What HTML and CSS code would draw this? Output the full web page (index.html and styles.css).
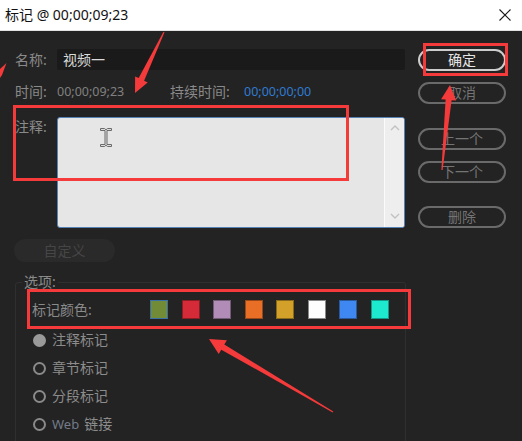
FILE: index.html
```html
<!DOCTYPE html>
<html lang="zh-CN">
<head>
<meta charset="utf-8">
<title>标记</title>
<link rel="stylesheet" href="styles.css">
</head>
<body>
<div class="window">
  <header class="titlebar">
    <span class="title">标记 @ 00;00;09;23</span>
    <svg class="close" width="12" height="12" viewBox="0 0 12 12"><path d="M0.5 0.5 L11.5 11.5 M11.5 0.5 L0.5 11.5" stroke="#1a1a1a" stroke-width="1.1" fill="none"/></svg>
  </header>
  <div class="content">
    <div class="left">
      <div class="row name-row">
        <span class="label field-label">名称:</span>
        <div class="text-input">视频一</div>
      </div>
      <div class="row time-row">
        <div class="time-group">
          <span class="label field-label">时间:</span><span class="num">00;00;09;23</span>
        </div>
        <span class="label dur-label">持续时间:</span><span class="num blue">00;00;00;00</span>
      </div>
      <div class="row comment-row">
        <span class="label field-label">注释:</span>
        <div class="textarea">
          <div class="ta-body"></div>
          <div class="ta-scroll">
            <svg width="10" height="6" viewBox="0 0 10 6"><path d="M1 5 L5 1 L9 5" stroke="#c2c2c2" stroke-width="1.4" fill="none"/></svg>
            <svg width="10" height="6" viewBox="0 0 10 6"><path d="M1 1 L5 5 L9 1" stroke="#c2c2c2" stroke-width="1.4" fill="none"/></svg>
          </div>
        </div>
      </div>
      <button class="custom-btn">自定义</button>
      <fieldset class="options">
        <legend>选项:</legend>
        <div class="options-inner">
          <div class="color-row">
            <span class="color-label">标记颜色:</span>
            <div class="swatches">
              <span class="swatch c-olive"></span>
              <span class="swatch c-red"></span>
              <span class="swatch c-lavender"></span>
              <span class="swatch c-orange"></span>
              <span class="swatch c-gold"></span>
              <span class="swatch c-white"></span>
              <span class="swatch c-blue"></span>
              <span class="swatch c-cyan"></span>
            </div>
          </div>
          <ul class="radios">
            <li><span class="radio checked"></span><span>注释标记</span></li>
            <li><span class="radio"></span><span>章节标记</span></li>
            <li><span class="radio"></span><span>分段标记</span></li>
            <li><span class="radio"></span><span><span class="web">Web</span>链接</span></li>
          </ul>
        </div>
      </fieldset>
    </div>
    <div class="right">
      <button class="btn primary">确定</button>
      <button class="btn gap-sm">取消</button>
      <button class="btn gap-lg">上一个</button>
      <button class="btn gap-sm">下一个</button>
      <button class="btn gap-lg2">删除</button>
    </div>
  </div>

  <svg class="cursor" width="12" height="19" viewBox="0 0 12 19"><path d="M0.5 0.5 H4.5 L6 1.8 L7.5 0.5 H11.5 V2.5 H7 V16.5 H11.5 V18.5 H7.5 L6 17.2 L4.5 18.5 H0.5 V16.5 H5 V2.5 H0.5 Z" fill="#dcdcdc" stroke="#6b6b6b" stroke-width="1"/></svg>

  <div class="mark-box mb-confirm"></div>
  <div class="mark-box mb-comment"></div>
  <div class="mark-box mb-colors"></div>

  <svg class="arrows" width="522" height="441" viewBox="0 0 522 441">
    <polygon points="164.5,32.2 144.1,80.7 147.7,82.4 135,93 135.1,76.4 138.7,78.1 163.5,31.8" fill="#f43a3a"/>
    <polygon points="442.6,170 451.6,100.2 456.1,100.6 450,85 441.1,99.2 445.6,99.6 441.4,170" fill="#f43a3a"/>
    <polygon points="333.3,411.6 224.3,344.5 226.9,340.2 209,339 218.7,354 221.3,349.7 332.7,412.4" fill="#f43a3a"/>
    <polygon points="6.5,63 0,69 0,78 2,75" fill="#f43a3a"/>
  </svg>
</div>
</body>
</html>
```

FILE: styles.css
```css
* { box-sizing: border-box; }
html, body { margin: 0; padding: 0; }
body {
  width: 522px;
  height: 441px;
  overflow: hidden;
  background: #232323;
  font-family: "Noto Sans", "Noto Sans CJK SC", sans-serif;
}
.window { position: relative; width: 522px; height: 441px; overflow: hidden; }

.titlebar {
  height: 31px;
  background: #ffffff;
  display: flex;
  align-items: center;
  justify-content: space-between;
  padding: 0 11px 0 5px;
  border-bottom: 1px solid #e2e2e2;
}
.title { font-size: 14px; line-height: 20px; color: #111; }
.close { display: block; }

.content { display: flex; gap: 13px; padding: 18px 0 0 14px; }
.left { width: 391px; display: flex; flex-direction: column; }
.right { width: 88px; display: flex; flex-direction: column; }

.row { display: flex; }
.label { color: #8a8a8a; font-size: 14px; line-height: 18px; padding-left: 1px; white-space: nowrap; }
.field-label { width: 43px; flex: none; }

.name-row { height: 21px; align-items: center; }
.text-input {
  flex: 1;
  height: 21px;
  background: #1a1a1a;
  border-radius: 2px;
  color: #dadada;
  font-size: 14px;
  line-height: 21px;
  padding-left: 6px;
}

.time-row { margin-top: 12px; height: 20px; align-items: center; }
.time-group { width: 156px; display: flex; align-items: center; }
.num { font-size: 12.5px; line-height: 18px; color: #808080; }
.blue { color: #2f7bd2; }
.dur-label { width: 74px; padding-left: 0; }

.comment-row { margin-top: 15px; align-items: flex-start; }
.comment-row .label { padding-top: 1px; }
.textarea {
  flex: 1;
  height: 111px;
  display: flex;
  background: #e6e6e6;
  border: 1px solid #5581b6;
  border-radius: 3px;
  overflow: hidden;
}
.ta-body { flex: 1; }
.ta-scroll {
  width: 20px;
  background: #eeeeee;
  border-left: 1px solid #fbfbfb;
  display: flex;
  flex-direction: column;
  justify-content: space-between;
  align-items: center;
  padding: 7px 0 8px;
}
.ta-scroll svg { display: block; }

.custom-btn {
  margin-top: 11px;
  width: 101px;
  height: 23px;
  border: none;
  border-radius: 12px;
  background: #2a2a2a;
  color: #464646;
  font-family: inherit;
  font-size: 14px;
  line-height: 23px;
  padding: 0;
}

.options {
  margin: 10px 0 0 1px;
  width: 391px;
  min-width: 0;
  border: 1px solid #2f2f2f;
  border-radius: 3px;
  padding: 0 0 40px 0;
}
.options legend {
  margin-left: 6px;
  padding: 0 2px;
  font-size: 14px;
  line-height: 20px;
  color: #8a8a8a;
}
.options-inner { padding-left: 16px; }

.color-row { display: flex; align-items: center; height: 19px; margin-top: 8px; }
.color-label { width: 118px; flex: none; color: #8a8a8a; font-size: 14px; line-height: 19px; }
.swatches { display: flex; gap: 13.5px; }
.swatch { width: 18px; height: 19px; border: 1px solid rgba(0, 0, 0, 0.35); }
.c-olive { background: #718b36; border-color: #3a6fa8; }
.c-red { background: #d52b38; }
.c-lavender { background: #b08cb6; }
.c-orange { background: #ea6f26; }
.c-gold { background: #d3a129; }
.c-white { background: #fefefe; border-color: #8a8a8a; }
.c-blue { background: #3f88f2; }
.c-cyan { background: #1de9cf; }

.radios { list-style: none; margin: 7px 0 0; padding: 0; }
.radios li {
  height: 28px;
  display: flex;
  align-items: center;
  gap: 6px;
  color: #8c8c8c;
  font-size: 14px;
  line-height: 18px;
}
.radio {
  width: 13px;
  height: 13px;
  margin-left: 1px;
  border: 2px solid #8a8a8a;
  border-radius: 50%;
  flex: none;
}
.radio.checked { background: #9a9a9a; border-color: #9a9a9a; }
.web { color: #737a8a; font-size: 13px; margin-right: 5px; }

.btn {
  width: 88px;
  height: 22px;
  padding: 0;
  border: 2px solid #6a6a6a;
  border-radius: 11px;
  background: transparent;
  color: #747474;
  font-family: inherit;
  font-size: 14px;
  line-height: 18px;
}
.btn.primary { border-color: #cdcdcd; color: #e6e6e6; }
.gap-sm { margin-top: 11px; }
.gap-lg { margin-top: 24px; }
.gap-lg2 { margin-top: 23px; }

.cursor { position: absolute; left: 100px; top: 128px; }

.mark-box { position: absolute; border: 3px solid #f43a3a; }
.mb-confirm { left: 423px; top: 43px; width: 85px; height: 33px; }
.mb-comment { left: 13px; top: 105px; width: 336px; height: 76px; }
.mb-colors { left: 27px; top: 289px; width: 384px; height: 40px; }

.arrows { position: absolute; left: 0; top: 0; pointer-events: none; }
```
